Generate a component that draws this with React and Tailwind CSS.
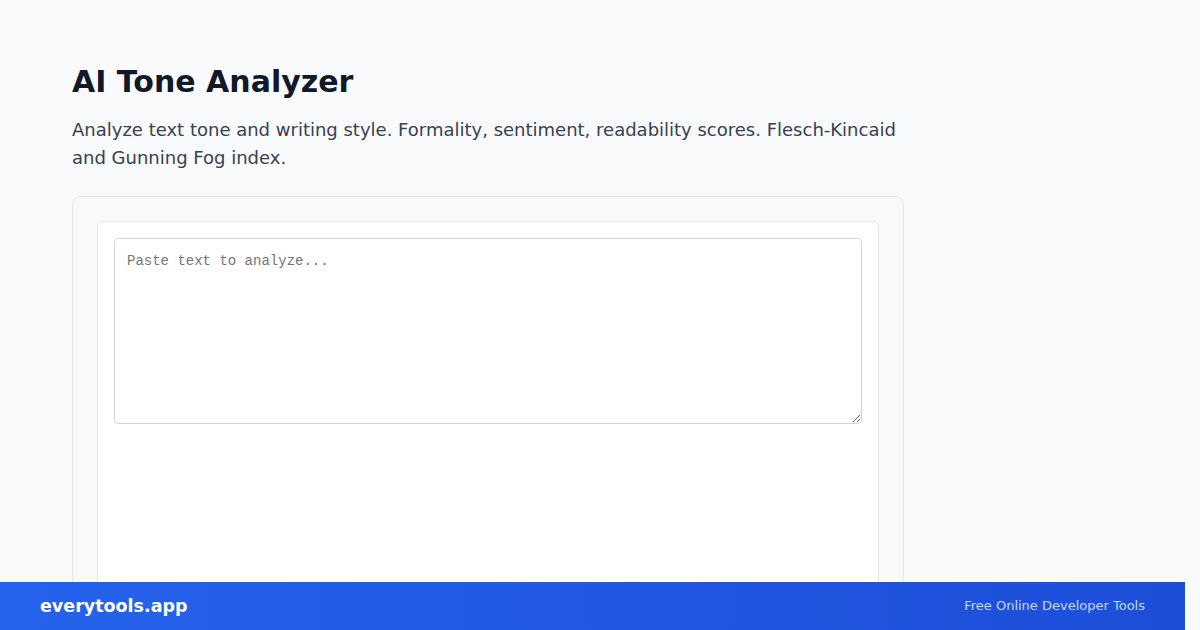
export default function App() {
    return (
        <div className="h-[630px] bg-[#f9fafb] font-['DejaVu_Sans',sans-serif] overflow-hidden">
            <div className="pl-[72px] pt-[64px] w-[904px]">
                <h1 className="text-[30px] leading-9 font-bold text-[#111827]">AI Tone Analyzer</h1>
                <p className="mt-4 text-lg leading-7 text-[#374151]">
                    Analyze text tone and writing style. Formality, sentiment, readability scores. Flesch-Kincaid and Gunning Fog index.
                </p>
                <div className="mt-6 border border-[#e5e7eb] rounded-lg bg-[#f9fafb] p-6">
                    <div className="bg-white border border-[#e5e7eb] rounded-md p-4 h-[500px]">
                        <textarea
                            className="block w-full h-[186px] border border-[#d1d5db] rounded px-3 py-3 font-['Liberation_Mono',monospace] text-sm text-[#111827] placeholder:text-[#757575] bg-white"
                            placeholder="Paste text to analyze..."
                        ></textarea>
                    </div>
                </div>
            </div>
            <div className="fixed bottom-0 left-0 w-[1185px] h-12 bg-gradient-to-r from-[#2563eb] to-[#1d4ed8] flex items-center justify-between px-10">
                <span className="text-white font-bold text-[17.5px]">everytools.app</span>
                <span className="text-[13px] text-[#c7d7fb]">Free Online Developer Tools</span>
            </div>
        </div>
    )
}
